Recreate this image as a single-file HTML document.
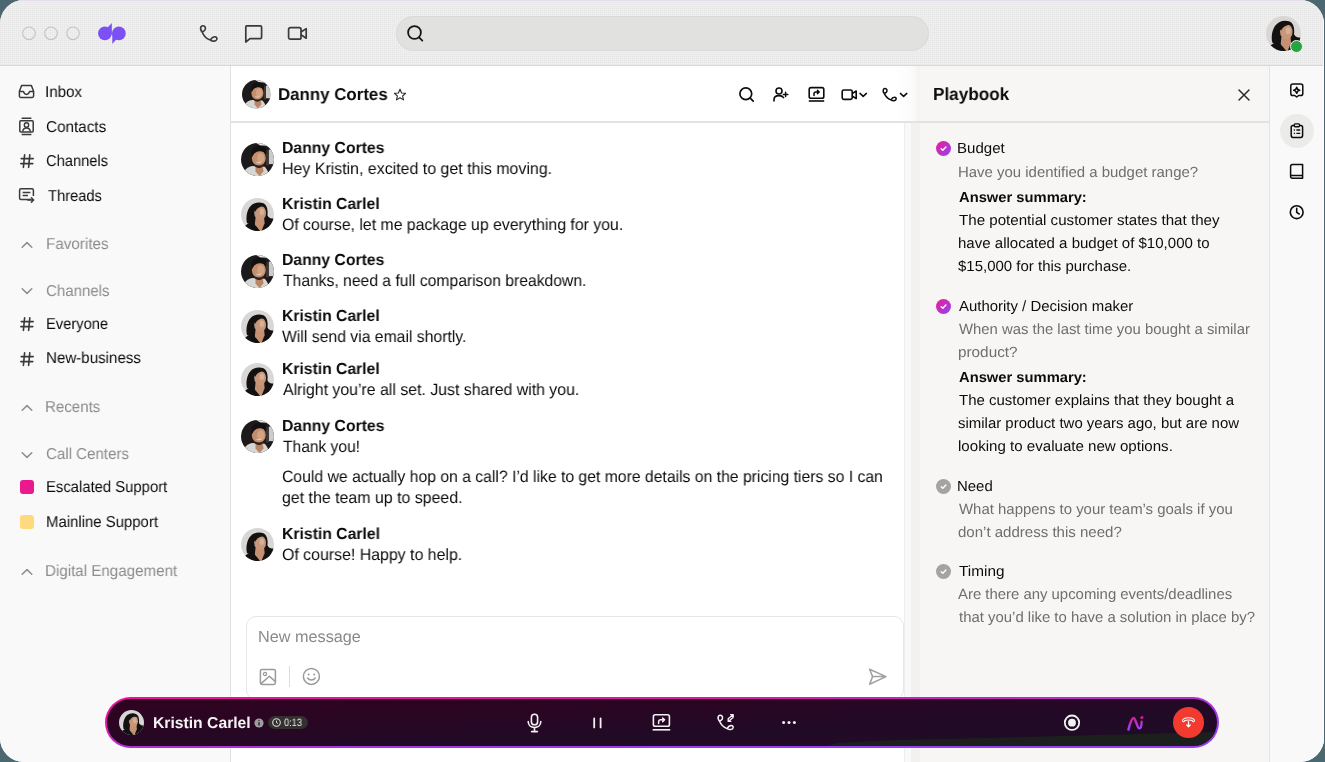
<!DOCTYPE html>
<html><head><meta charset="utf-8"><title>Dialpad</title><style>
*{margin:0;padding:0;box-sizing:border-box}
html,body{width:1325px;height:762px;overflow:hidden;background:#4b676f;font-family:"Liberation Sans",sans-serif}
#win{position:absolute;left:0;top:0;width:1324px;height:762px;border-radius:24px;overflow:hidden;background:#f9f9f9}
#edge{position:absolute;left:1323px;top:0;width:1px;height:762px;background:#fdfdfd;z-index:5}
.t{position:absolute;white-space:nowrap;text-rendering:geometricPrecision;will-change:transform}
.a{position:absolute}
svg{position:absolute;overflow:visible}
</style></head>
<body><div id="win">
<div class="a" style="left:0;top:0;width:1325px;height:66px;background:#eeeeed;border-bottom:1px solid #d8d8d8"></div>
<svg style="left:0;top:0" width="1325" height="65"><defs><pattern id="dots" width="2" height="2" patternUnits="userSpaceOnUse"><rect x="0" y="0" width="1" height="1" fill="#e5e5e5"/></pattern></defs><rect width="1325" height="65" fill="url(#dots)"/></svg>
<div class="a" style="left:0;top:0;width:1325px;height:1px;background:#e6def0"></div>
<div class="a" style="left:0;top:66px;width:231px;height:696px;background:#f9f9f9;border-right:1px solid #e2e2e2"></div>
<div class="a" style="left:231px;top:66px;width:690px;height:696px;background:#ffffff"></div>
<div class="a" style="left:903.6px;top:123px;width:1px;height:639px;background:#ededed"></div>
<div class="a" style="left:904.6px;top:123px;width:6.6px;height:639px;background:#f8f8f8"></div>
<div class="a" style="left:911.2px;top:123px;width:8.6px;height:639px;background:#f1f1f1"></div>
<div class="a" style="left:893px;top:66px;width:26.8px;height:55px;background:linear-gradient(90deg,rgba(0,0,0,0),rgba(0,0,0,0.015) 70%,rgba(0,0,0,0.05))"></div>
<div class="a" style="left:919.8px;top:66px;width:350px;height:696px;background:#f7f6f5"></div>
<div class="a" style="left:1269px;top:66px;width:56px;height:696px;background:#f9f9f9;border-left:1px solid #e3e3e3"></div>
<div class="a" style="left:231px;top:121px;width:1038px;height:2px;background:#e2e2e2"></div>
<svg style="left:21px;top:25px;" width="16" height="16" viewBox="0 0 16 16"><circle cx="8" cy="8.3" r="6.3" fill="none" stroke="#c8c2c2" stroke-width="1.1"/></svg>
<svg style="left:43px;top:25px;" width="16" height="16" viewBox="0 0 16 16"><circle cx="8" cy="8.3" r="6.3" fill="none" stroke="#c8c2c2" stroke-width="1.1"/></svg>
<svg style="left:65.3px;top:25px;" width="16" height="16" viewBox="0 0 16 16"><circle cx="8" cy="8.3" r="6.3" fill="none" stroke="#c8c2c2" stroke-width="1.1"/></svg>
<svg style="left:96px;top:22px;" width="32" height="24" viewBox="0 0 32 24"><g fill="#7b50f5"><circle cx="8.9" cy="11.4" r="6.8"/><path d="M11.6 5.4 L15.8 0.9 L15.8 12.4 L10.5 12.4Z"/><circle cx="22.9" cy="11.4" r="6.8"/><path d="M20.2 17.4 L16.3 22 L16.3 10.4 L21.5 10.4Z"/></g></svg>
<svg style="left:198px;top:22px;" width="22" height="22" viewBox="0 0 22 22"><g transform="translate(0.46,0.5) scale(1.08)"><path d="M3.5 9 C2.2 7.6 1.7 5.4 2.3 4.1 C2.9 2.8 4.7 2.7 5.7 3.6 C6.9 4.7 6.6 6.8 5.2 7.8 C4.6 8.3 4 8.6 3.5 9 C4.8 12.3 7.5 15 11 16.3 C11.8 14.9 13.4 13.2 15.2 13.2 C16.6 13.2 17.4 14.2 17 15.6 C16.5 17.4 13.6 17.9 11 16.3" fill="none" stroke="#3a3a3a" stroke-width="1.5" stroke-linecap="round" stroke-linejoin="round"/></g></svg>
<svg style="left:244px;top:24px;" width="20" height="20" viewBox="0 0 20 20"><path d="M2.6 1.8 H16.2 C17 1.8 17.6 2.4 17.6 3.2 V13.2 C17.6 14 17 14.6 16.2 14.6 H6 L1.8 18 V3.2 C1.8 2.4 2.4 1.8 2.6 1.8Z" fill="none" stroke="#3a3a3a" stroke-width="1.7" stroke-linejoin="round"/></svg>
<svg style="left:287px;top:26px;" width="22" height="15" viewBox="0 0 22 15"><rect x="1.6" y="1.6" width="12.4" height="11.6" rx="1.8" fill="none" stroke="#3a3a3a" stroke-width="1.7"/><path d="M14 6 L19.2 2.6 V12.2 L14 8.8" fill="none" stroke="#3a3a3a" stroke-width="1.7" stroke-linejoin="round"/></svg>
<div class="a" style="left:396px;top:16px;width:533px;height:35px;border-radius:17.5px;background:#e1e1e0;border:1px solid #d9d9d8"></div>
<svg style="left:405px;top:23px;" width="20" height="20" viewBox="0 0 20 20"><circle cx="9.5" cy="9.5" r="6.4" fill="none" stroke="#141414" stroke-width="1.8"/><path d="M14.1 14.3 L17.3 17.6" stroke="#141414" stroke-width="1.8" stroke-linecap="round"/></svg>
<svg style="left:1266.0px;top:16.0px" width="35" height="35" viewBox="0 0 100 100"><defs><clipPath id="c1"><circle cx="50" cy="50" r="50"/></clipPath></defs>
<g clip-path="url(#c1)">
<rect width="100" height="100" fill="#d9d7d5"/>
<path d="M18 76 C14 58 18 40 26 28 C36 14 54 10 68 16 C80 22 82 40 80 52 C84 60 90 62 100 62 L74 82 L34 84Z" fill="#131111"/>
<path d="M44 60 L70 60 L74 100 L40 100Z" fill="#c49272"/>
<ellipse cx="58" cy="45" rx="18" ry="22" fill="#c8977a"/>
<ellipse cx="63" cy="42" rx="7" ry="10" fill="#d4b09a"/>
<path d="M38 34 C44 20 58 18 72 26 C60 25 50 28 43 42Z" fill="#131111"/>
<path d="M2 100 C8 84 20 76 36 74 L50 90 L58 100Z" fill="#121010"/>
<path d="M62 100 L70 80 C80 68 90 64 100 64 V100Z" fill="#121010"/>
</g></svg>
<div class="a" style="left:1289.5px;top:39.5px;width:13px;height:13px;border-radius:50%;background:#23a53f;border:1.5px solid #f4f4f4"></div>
<svg style="left:18px;top:84px;" width="18" height="15" viewBox="0 0 18 15"><path d="M1.4 7.2 L3.6 1.6 H13.4 L15.6 7.2 V12 C15.6 12.8 15 13.4 14.2 13.4 H2.8 C2 13.4 1.4 12.8 1.4 12Z M1.4 7.4 H5.4 C6 9.4 7 10.4 8.5 10.4 C10 10.4 11 9.4 11.6 7.4 H15.6" fill="none" stroke="#3a3a3a" stroke-width="1.5" stroke-linejoin="round"/></svg>
<div id="t0" class="t" style="left:45.43px;top:82.53px;font-size:15.8px;line-height:20px;font-weight:400;color:#0c0c0c;letter-spacing:0px;transform:scaleX(0.9565);transform-origin:0 0;">Inbox</div>
<svg style="left:18px;top:117px;" width="18" height="19" viewBox="0 0 18 19"><path d="M3.6 1.2 H13.4 M3.6 17.6 H13.4" stroke="#3a3a3a" stroke-width="1.5"/><rect x="1.8" y="3.8" width="13.4" height="11.2" rx="1" fill="none" stroke="#3a3a3a" stroke-width="1.5"/><circle cx="8.5" cy="8" r="2.2" fill="none" stroke="#3a3a3a" stroke-width="1.4"/><path d="M4.6 14.6 C5 12 6.6 11 8.5 11 C10.4 11 12 12 12.4 14.6" fill="none" stroke="#3a3a3a" stroke-width="1.4"/></svg>
<div id="t1" class="t" style="left:45.64px;top:118.13px;font-size:15.8px;line-height:20px;font-weight:400;color:#0c0c0c;letter-spacing:0px;transform:scaleX(0.9663);transform-origin:0 0;">Contacts</div>
<svg style="left:19px;top:153px;" width="16" height="16" viewBox="0 0 16 16"><path d="M5.6 1.8 L4.4 14.4 M10.8 1.8 L9.6 14.4 M2.2 5.6 H14.2 M1.8 10.6 H13.8" stroke="#3a3a3a" stroke-width="1.6" stroke-linecap="round"/></svg>
<div id="t2" class="t" style="left:45.82px;top:151.83px;font-size:15.8px;line-height:20px;font-weight:400;color:#0c0c0c;letter-spacing:0px;transform:scaleX(0.9304);transform-origin:0 0;">Channels</div>
<svg style="left:18px;top:187px;" width="18" height="18" viewBox="0 0 18 18"><path d="M13 12.6 H3 C2.2 12.6 1.6 12 1.6 11.2 V3.2 C1.6 2.4 2.2 1.8 3 1.8 H14 C14.8 1.8 15.4 2.4 15.4 3.2 V9" fill="none" stroke="#3a3a3a" stroke-width="1.5" stroke-linejoin="round"/><path d="M4.6 5.4 H12.4 M4.6 8.6 H10" stroke="#3a3a3a" stroke-width="1.5"/><path d="M9.8 13 H15.4 M13.4 10.8 L15.6 13 L13.4 15.2" fill="none" stroke="#3a3a3a" stroke-width="1.5" stroke-linecap="round" stroke-linejoin="round"/></svg>
<div id="t3" class="t" style="left:47.98px;top:186.73px;font-size:15.8px;line-height:20px;font-weight:400;color:#0c0c0c;letter-spacing:0px;transform:scaleX(0.9303);transform-origin:0 0;">Threads</div>
<svg style="left:21px;top:240.5px;" width="12" height="8" viewBox="0 0 12 8"><path d="M1.2 6.2 L6 1.6 L10.8 6.2" fill="none" stroke="#8d8d8d" stroke-width="1.5" stroke-linecap="round" stroke-linejoin="round"/></svg>
<div id="t4" class="t" style="left:46.04px;top:235.43px;font-size:15.8px;line-height:20px;font-weight:400;color:#8c8c8c;letter-spacing:0px;transform:scaleX(0.9633);transform-origin:0 0;">Favorites</div>
<svg style="left:21px;top:287px;" width="12" height="8" viewBox="0 0 12 8"><path d="M1.2 1.8 L6 6.4 L10.8 1.8" fill="none" stroke="#8d8d8d" stroke-width="1.5" stroke-linecap="round" stroke-linejoin="round"/></svg>
<div id="t5" class="t" style="left:46.15px;top:282.33px;font-size:15.8px;line-height:20px;font-weight:400;color:#8c8c8c;letter-spacing:0px;transform:scaleX(0.9525);transform-origin:0 0;">Channels</div>
<svg style="left:19px;top:316px;" width="16" height="16" viewBox="0 0 16 16"><path d="M5.6 1.8 L4.4 14.4 M10.8 1.8 L9.6 14.4 M2.2 5.6 H14.2 M1.8 10.6 H13.8" stroke="#3a3a3a" stroke-width="1.6" stroke-linecap="round"/></svg>
<div id="t6" class="t" style="left:45.87px;top:315.23px;font-size:15.8px;line-height:20px;font-weight:400;color:#0c0c0c;letter-spacing:0px;transform:scaleX(0.9292);transform-origin:0 0;">Everyone</div>
<svg style="left:19px;top:351px;" width="16" height="16" viewBox="0 0 16 16"><path d="M5.6 1.8 L4.4 14.4 M10.8 1.8 L9.6 14.4 M2.2 5.6 H14.2 M1.8 10.6 H13.8" stroke="#3a3a3a" stroke-width="1.6" stroke-linecap="round"/></svg>
<div id="t7" class="t" style="left:45.73px;top:348.93px;font-size:15.8px;line-height:20px;font-weight:400;color:#0c0c0c;letter-spacing:0px;transform:scaleX(0.9566);transform-origin:0 0;">New-business</div>
<svg style="left:21px;top:404px;" width="12" height="8" viewBox="0 0 12 8"><path d="M1.2 6.2 L6 1.6 L10.8 6.2" fill="none" stroke="#8d8d8d" stroke-width="1.5" stroke-linecap="round" stroke-linejoin="round"/></svg>
<div id="t8" class="t" style="left:45.34px;top:398.03px;font-size:15.8px;line-height:20px;font-weight:400;color:#8c8c8c;letter-spacing:0px;transform:scaleX(0.9524);transform-origin:0 0;">Recents</div>
<svg style="left:21px;top:451px;" width="12" height="8" viewBox="0 0 12 8"><path d="M1.2 1.8 L6 6.4 L10.8 1.8" fill="none" stroke="#8d8d8d" stroke-width="1.5" stroke-linecap="round" stroke-linejoin="round"/></svg>
<div id="t9" class="t" style="left:46.15px;top:444.93px;font-size:15.8px;line-height:20px;font-weight:400;color:#8c8c8c;letter-spacing:0px;transform:scaleX(0.9549);transform-origin:0 0;">Call Centers</div>
<div class="a" style="left:20px;top:480px;width:14px;height:14px;border-radius:3px;background:#ea1a8e"></div>
<div id="t10" class="t" style="left:45.87px;top:478.23px;font-size:15.8px;line-height:20px;font-weight:400;color:#0c0c0c;letter-spacing:0px;transform:scaleX(0.9390);transform-origin:0 0;">Escalated Support</div>
<div class="a" style="left:20px;top:515px;width:14px;height:14px;border-radius:3px;background:#ffd97e"></div>
<div id="t11" class="t" style="left:45.79px;top:513.23px;font-size:15.8px;line-height:20px;font-weight:400;color:#0c0c0c;letter-spacing:0px;transform:scaleX(0.9445);transform-origin:0 0;">Mainline Support</div>
<svg style="left:21px;top:567.5px;" width="12" height="8" viewBox="0 0 12 8"><path d="M1.2 6.2 L6 1.6 L10.8 6.2" fill="none" stroke="#8d8d8d" stroke-width="1.5" stroke-linecap="round" stroke-linejoin="round"/></svg>
<div id="t12" class="t" style="left:45.34px;top:561.63px;font-size:15.8px;line-height:20px;font-weight:400;color:#8c8c8c;letter-spacing:0px;transform:scaleX(0.9584);transform-origin:0 0;">Digital Engagement</div>
<svg style="left:241.75px;top:80.05px" width="28.5" height="28.5" viewBox="0 0 100 100"><defs><clipPath id="c2"><circle cx="50" cy="50" r="50"/></clipPath></defs>
<g clip-path="url(#c2)">
<rect width="100" height="100" fill="#1c1a1a"/>
<path d="M46 0 H100 V24 C90 12 76 6 60 8Z" fill="#e6e6e6"/>
<rect x="84" y="20" width="16" height="44" fill="#cbcbcb"/>
<rect x="76" y="22" width="8" height="46" fill="#3c3836"/>
<path d="M4 100 C8 82 20 72 36 70 L72 72 C80 80 84 92 86 100Z" fill="#d8d6d4"/>
<path d="M44 66 L66 66 L68 86 L56 100 L44 86Z" fill="#b98565"/>
<ellipse cx="54" cy="46" rx="21" ry="25" fill="#c48e6c"/>
<ellipse cx="60" cy="46" rx="11" ry="15" fill="#d2a484"/>
<path d="M32 36 C30 16 44 8 58 8 C72 8 80 20 76 34 C70 26 60 24 52 26 C44 28 38 32 35 42Z" fill="#121010"/>
<path d="M34 56 C38 70 46 76 54 76 C62 76 70 70 74 56 C70 64 62 68 54 68 C46 68 38 64 34 56Z" fill="#2a2220"/>
<path d="M47 58 C51 61 57 61 61 57" stroke="#e8ddd4" stroke-width="3" fill="none"/>
</g></svg>
<div id="t13" class="t" style="left:277.50px;top:83.67px;font-size:17.1px;line-height:21px;font-weight:700;color:#0c0c0c;letter-spacing:0px;transform:scaleX(0.9865);transform-origin:0 0;">Danny Cortes</div>
<svg style="left:393px;top:88px;" width="14" height="13" viewBox="0 0 14 13"><path d="M7 1.3 L8.6 5 L12.6 5.3 L9.6 8 L10.5 11.9 L7 9.8 L3.5 11.9 L4.4 8 L1.4 5.3 L5.4 5Z" fill="none" stroke="#2a2a2a" stroke-width="1.1" stroke-linejoin="round"/></svg>
<svg style="left:738px;top:86px;" width="18" height="18" viewBox="0 0 18 18"><circle cx="7.8" cy="7.8" r="5.9" fill="none" stroke="#0c0c0c" stroke-width="1.7"/><path d="M12.2 12.2 L15.2 15.2" stroke="#0c0c0c" stroke-width="1.7" stroke-linecap="round"/></svg>
<svg style="left:772px;top:86px;" width="18" height="17" viewBox="0 0 18 17"><circle cx="7" cy="5" r="3" fill="none" stroke="#0c0c0c" stroke-width="1.6"/><path d="M2 15 V13.6 C2 11.2 3.8 9.6 7 9.6 C9.4 9.6 10.8 10.4 11.6 11.6" fill="none" stroke="#0c0c0c" stroke-width="1.6" stroke-linecap="round"/><path d="M13.6 6.2 V10.6 M11.4 8.4 H15.8" stroke="#0c0c0c" stroke-width="1.5" stroke-linecap="round"/></svg>
<svg style="left:807px;top:86px;" width="19" height="17" viewBox="0 0 19 17"><rect x="2.2" y="1.6" width="14.6" height="10.6" rx="1.8" fill="none" stroke="#0c0c0c" stroke-width="1.6"/><path d="M1.8 15 H17.2" stroke="#0c0c0c" stroke-width="1.6"/><path d="M7 9.6 V8 C7 6.8 7.8 6 9 6 H12 M10.4 4.4 L12.2 6 L10.4 7.6" fill="none" stroke="#0c0c0c" stroke-width="1.5" stroke-linecap="round" stroke-linejoin="round"/></svg>
<svg style="left:840px;top:88px;" width="30" height="14" viewBox="0 0 30 14"><rect x="2.2" y="2" width="10" height="9.4" rx="1.6" fill="none" stroke="#0c0c0c" stroke-width="1.6"/><path d="M12.2 5.6 L16.2 3 V10.6 L12.2 8" fill="none" stroke="#0c0c0c" stroke-width="1.6" stroke-linejoin="round"/><path d="M20 5.4 L23.2 8.4 L26.4 5.4" fill="none" stroke="#0c0c0c" stroke-width="1.5" stroke-linecap="round" stroke-linejoin="round"/></svg>
<svg style="left:882px;top:86px;" width="28" height="17" viewBox="0 0 28 17"><g transform="translate(-0.56,-0.12) scale(0.86)"><path d="M3.5 9 C2.2 7.6 1.7 5.4 2.3 4.1 C2.9 2.8 4.7 2.7 5.7 3.6 C6.9 4.7 6.6 6.8 5.2 7.8 C4.6 8.3 4 8.6 3.5 9 C4.8 12.3 7.5 15 11 16.3 C11.8 14.9 13.4 13.2 15.2 13.2 C16.6 13.2 17.4 14.2 17 15.6 C16.5 17.4 13.6 17.9 11 16.3" fill="none" stroke="#0c0c0c" stroke-width="1.75" stroke-linecap="round" stroke-linejoin="round"/></g><path d="M18.4 7.4 L21.6 10.4 L24.8 7.4" fill="none" stroke="#0c0c0c" stroke-width="1.5" stroke-linecap="round" stroke-linejoin="round"/></svg>
<svg style="left:241.0px;top:142.5px" width="33" height="33" viewBox="0 0 100 100"><defs><clipPath id="c3"><circle cx="50" cy="50" r="50"/></clipPath></defs>
<g clip-path="url(#c3)">
<rect width="100" height="100" fill="#1c1a1a"/>
<path d="M46 0 H100 V24 C90 12 76 6 60 8Z" fill="#e6e6e6"/>
<rect x="84" y="20" width="16" height="44" fill="#cbcbcb"/>
<rect x="76" y="22" width="8" height="46" fill="#3c3836"/>
<path d="M4 100 C8 82 20 72 36 70 L72 72 C80 80 84 92 86 100Z" fill="#d8d6d4"/>
<path d="M44 66 L66 66 L68 86 L56 100 L44 86Z" fill="#b98565"/>
<ellipse cx="54" cy="46" rx="21" ry="25" fill="#c48e6c"/>
<ellipse cx="60" cy="46" rx="11" ry="15" fill="#d2a484"/>
<path d="M32 36 C30 16 44 8 58 8 C72 8 80 20 76 34 C70 26 60 24 52 26 C44 28 38 32 35 42Z" fill="#121010"/>
<path d="M34 56 C38 70 46 76 54 76 C62 76 70 70 74 56 C70 64 62 68 54 68 C46 68 38 64 34 56Z" fill="#2a2220"/>
<path d="M47 58 C51 61 57 61 61 57" stroke="#e8ddd4" stroke-width="3" fill="none"/>
</g></svg>
<div id="t14" class="t" style="left:281.81px;top:138.66px;font-size:16.0px;line-height:20px;font-weight:700;color:#0c0c0c;letter-spacing:0px;transform:scaleX(0.9838);transform-origin:0 0;">Danny Cortes</div>
<div id="t15" class="t" style="left:281.53px;top:158.72px;font-size:16.4px;line-height:20px;font-weight:400;color:#0c0c0c;letter-spacing:0px;transform:scaleX(0.9720);transform-origin:0 0;">Hey Kristin, excited to get this moving.</div>
<svg style="left:241.0px;top:198.4px" width="33" height="33" viewBox="0 0 100 100"><defs><clipPath id="c4"><circle cx="50" cy="50" r="50"/></clipPath></defs>
<g clip-path="url(#c4)">
<rect width="100" height="100" fill="#d9d7d5"/>
<path d="M18 76 C14 58 18 40 26 28 C36 14 54 10 68 16 C80 22 82 40 80 52 C84 60 90 62 100 62 L74 82 L34 84Z" fill="#131111"/>
<path d="M44 60 L70 60 L74 100 L40 100Z" fill="#c49272"/>
<ellipse cx="58" cy="45" rx="18" ry="22" fill="#c8977a"/>
<ellipse cx="63" cy="42" rx="7" ry="10" fill="#d4b09a"/>
<path d="M38 34 C44 20 58 18 72 26 C60 25 50 28 43 42Z" fill="#131111"/>
<path d="M2 100 C8 84 20 76 36 74 L50 90 L58 100Z" fill="#121010"/>
<path d="M62 100 L70 80 C80 68 90 64 100 64 V100Z" fill="#121010"/>
</g></svg>
<div id="t16" class="t" style="left:281.82px;top:194.56px;font-size:16.0px;line-height:20px;font-weight:700;color:#0c0c0c;letter-spacing:0px;transform:scaleX(0.9804);transform-origin:0 0;">Kristin Carlel</div>
<div id="t17" class="t" style="left:281.81px;top:214.62px;font-size:16.4px;line-height:20px;font-weight:400;color:#0c0c0c;letter-spacing:0px;transform:scaleX(0.9652);transform-origin:0 0;">Of course, let me package up everything for you.</div>
<svg style="left:241.0px;top:254.5px" width="33" height="33" viewBox="0 0 100 100"><defs><clipPath id="c5"><circle cx="50" cy="50" r="50"/></clipPath></defs>
<g clip-path="url(#c5)">
<rect width="100" height="100" fill="#1c1a1a"/>
<path d="M46 0 H100 V24 C90 12 76 6 60 8Z" fill="#e6e6e6"/>
<rect x="84" y="20" width="16" height="44" fill="#cbcbcb"/>
<rect x="76" y="22" width="8" height="46" fill="#3c3836"/>
<path d="M4 100 C8 82 20 72 36 70 L72 72 C80 80 84 92 86 100Z" fill="#d8d6d4"/>
<path d="M44 66 L66 66 L68 86 L56 100 L44 86Z" fill="#b98565"/>
<ellipse cx="54" cy="46" rx="21" ry="25" fill="#c48e6c"/>
<ellipse cx="60" cy="46" rx="11" ry="15" fill="#d2a484"/>
<path d="M32 36 C30 16 44 8 58 8 C72 8 80 20 76 34 C70 26 60 24 52 26 C44 28 38 32 35 42Z" fill="#121010"/>
<path d="M34 56 C38 70 46 76 54 76 C62 76 70 70 74 56 C70 64 62 68 54 68 C46 68 38 64 34 56Z" fill="#2a2220"/>
<path d="M47 58 C51 61 57 61 61 57" stroke="#e8ddd4" stroke-width="3" fill="none"/>
</g></svg>
<div id="t18" class="t" style="left:281.87px;top:250.66px;font-size:16.0px;line-height:20px;font-weight:700;color:#0c0c0c;letter-spacing:0px;transform:scaleX(0.9829);transform-origin:0 0;">Danny Cortes</div>
<div id="t19" class="t" style="left:282.75px;top:270.72px;font-size:16.4px;line-height:20px;font-weight:400;color:#0c0c0c;letter-spacing:0px;transform:scaleX(0.9567);transform-origin:0 0;">Thanks, need a full comparison breakdown.</div>
<svg style="left:241.0px;top:309.90000000000003px" width="33" height="33" viewBox="0 0 100 100"><defs><clipPath id="c6"><circle cx="50" cy="50" r="50"/></clipPath></defs>
<g clip-path="url(#c6)">
<rect width="100" height="100" fill="#d9d7d5"/>
<path d="M18 76 C14 58 18 40 26 28 C36 14 54 10 68 16 C80 22 82 40 80 52 C84 60 90 62 100 62 L74 82 L34 84Z" fill="#131111"/>
<path d="M44 60 L70 60 L74 100 L40 100Z" fill="#c49272"/>
<ellipse cx="58" cy="45" rx="18" ry="22" fill="#c8977a"/>
<ellipse cx="63" cy="42" rx="7" ry="10" fill="#d4b09a"/>
<path d="M38 34 C44 20 58 18 72 26 C60 25 50 28 43 42Z" fill="#131111"/>
<path d="M2 100 C8 84 20 76 36 74 L50 90 L58 100Z" fill="#121010"/>
<path d="M62 100 L70 80 C80 68 90 64 100 64 V100Z" fill="#121010"/>
</g></svg>
<div id="t20" class="t" style="left:281.82px;top:307.06px;font-size:16.0px;line-height:20px;font-weight:700;color:#0c0c0c;letter-spacing:0px;transform:scaleX(0.9804);transform-origin:0 0;">Kristin Carlel</div>
<div id="t21" class="t" style="left:282.20px;top:327.12px;font-size:16.4px;line-height:20px;font-weight:400;color:#0c0c0c;letter-spacing:0px;transform:scaleX(0.9610);transform-origin:0 0;">Will send via email shortly.</div>
<svg style="left:241.0px;top:363.40000000000003px" width="33" height="33" viewBox="0 0 100 100"><defs><clipPath id="c7"><circle cx="50" cy="50" r="50"/></clipPath></defs>
<g clip-path="url(#c7)">
<rect width="100" height="100" fill="#d9d7d5"/>
<path d="M18 76 C14 58 18 40 26 28 C36 14 54 10 68 16 C80 22 82 40 80 52 C84 60 90 62 100 62 L74 82 L34 84Z" fill="#131111"/>
<path d="M44 60 L70 60 L74 100 L40 100Z" fill="#c49272"/>
<ellipse cx="58" cy="45" rx="18" ry="22" fill="#c8977a"/>
<ellipse cx="63" cy="42" rx="7" ry="10" fill="#d4b09a"/>
<path d="M38 34 C44 20 58 18 72 26 C60 25 50 28 43 42Z" fill="#131111"/>
<path d="M2 100 C8 84 20 76 36 74 L50 90 L58 100Z" fill="#121010"/>
<path d="M62 100 L70 80 C80 68 90 64 100 64 V100Z" fill="#121010"/>
</g></svg>
<div id="t22" class="t" style="left:281.82px;top:359.56px;font-size:16.0px;line-height:20px;font-weight:700;color:#0c0c0c;letter-spacing:0px;transform:scaleX(0.9804);transform-origin:0 0;">Kristin Carlel</div>
<div id="t23" class="t" style="left:282.76px;top:379.62px;font-size:16.4px;line-height:20px;font-weight:400;color:#0c0c0c;letter-spacing:0px;transform:scaleX(0.9680);transform-origin:0 0;">Alright you’re all set. Just shared with you.</div>
<svg style="left:241.0px;top:420.1px" width="33" height="33" viewBox="0 0 100 100"><defs><clipPath id="c8"><circle cx="50" cy="50" r="50"/></clipPath></defs>
<g clip-path="url(#c8)">
<rect width="100" height="100" fill="#1c1a1a"/>
<path d="M46 0 H100 V24 C90 12 76 6 60 8Z" fill="#e6e6e6"/>
<rect x="84" y="20" width="16" height="44" fill="#cbcbcb"/>
<rect x="76" y="22" width="8" height="46" fill="#3c3836"/>
<path d="M4 100 C8 82 20 72 36 70 L72 72 C80 80 84 92 86 100Z" fill="#d8d6d4"/>
<path d="M44 66 L66 66 L68 86 L56 100 L44 86Z" fill="#b98565"/>
<ellipse cx="54" cy="46" rx="21" ry="25" fill="#c48e6c"/>
<ellipse cx="60" cy="46" rx="11" ry="15" fill="#d2a484"/>
<path d="M32 36 C30 16 44 8 58 8 C72 8 80 20 76 34 C70 26 60 24 52 26 C44 28 38 32 35 42Z" fill="#121010"/>
<path d="M34 56 C38 70 46 76 54 76 C62 76 70 70 74 56 C70 64 62 68 54 68 C46 68 38 64 34 56Z" fill="#2a2220"/>
<path d="M47 58 C51 61 57 61 61 57" stroke="#e8ddd4" stroke-width="3" fill="none"/>
</g></svg>
<div id="t24" class="t" style="left:281.81px;top:417.26px;font-size:16.0px;line-height:20px;font-weight:700;color:#0c0c0c;letter-spacing:0px;transform:scaleX(0.9838);transform-origin:0 0;">Danny Cortes</div>
<div id="t25" class="t" style="left:282.75px;top:437.32px;font-size:16.4px;line-height:20px;font-weight:400;color:#0c0c0c;letter-spacing:0px;transform:scaleX(0.9504);transform-origin:0 0;">Thank you!</div>
<svg style="left:241.0px;top:528.3px" width="33" height="33" viewBox="0 0 100 100"><defs><clipPath id="c9"><circle cx="50" cy="50" r="50"/></clipPath></defs>
<g clip-path="url(#c9)">
<rect width="100" height="100" fill="#d9d7d5"/>
<path d="M18 76 C14 58 18 40 26 28 C36 14 54 10 68 16 C80 22 82 40 80 52 C84 60 90 62 100 62 L74 82 L34 84Z" fill="#131111"/>
<path d="M44 60 L70 60 L74 100 L40 100Z" fill="#c49272"/>
<ellipse cx="58" cy="45" rx="18" ry="22" fill="#c8977a"/>
<ellipse cx="63" cy="42" rx="7" ry="10" fill="#d4b09a"/>
<path d="M38 34 C44 20 58 18 72 26 C60 25 50 28 43 42Z" fill="#131111"/>
<path d="M2 100 C8 84 20 76 36 74 L50 90 L58 100Z" fill="#121010"/>
<path d="M62 100 L70 80 C80 68 90 64 100 64 V100Z" fill="#121010"/>
</g></svg>
<div id="t26" class="t" style="left:281.82px;top:525.46px;font-size:16.0px;line-height:20px;font-weight:700;color:#0c0c0c;letter-spacing:0px;transform:scaleX(0.9834);transform-origin:0 0;">Kristin Carlel</div>
<div id="t27" class="t" style="left:281.81px;top:544.52px;font-size:16.4px;line-height:20px;font-weight:400;color:#0c0c0c;letter-spacing:0px;transform:scaleX(0.9696);transform-origin:0 0;">Of course! Happy to help.</div>
<div id="t28" class="t" style="left:282.09px;top:467.22px;font-size:16.4px;line-height:20px;font-weight:400;color:#0c0c0c;letter-spacing:0px;transform:scaleX(0.9599);transform-origin:0 0;">Could we actually hop on a call? I’d like to get more details on the pricing tiers so I can</div>
<div id="t29" class="t" style="left:282.00px;top:487.92px;font-size:16.4px;line-height:20px;font-weight:400;color:#0c0c0c;letter-spacing:0px;transform:scaleX(0.9713);transform-origin:0 0;">get the team up to speed.</div>
<div class="a" style="left:246px;top:616px;width:658px;height:84px;border-radius:10px;background:#fff;border:1px solid #e6e6e6"></div>
<div id="t30" class="t" style="left:258.35px;top:627.32px;font-size:16.1px;line-height:20px;font-weight:400;color:#8a8a8a;letter-spacing:0px;transform:scaleX(1.0084);transform-origin:0 0;">New message</div>
<svg style="left:259px;top:668px;" width="18" height="18" viewBox="0 0 18 18"><rect x="1.4" y="1.4" width="15" height="15" rx="1.6" fill="none" stroke="#9a9a9a" stroke-width="1.5"/><circle cx="6" cy="6" r="1.6" fill="none" stroke="#9a9a9a" stroke-width="1.3"/><path d="M2 15.6 L10.4 8.2 L16.4 13.6" fill="none" stroke="#9a9a9a" stroke-width="1.5" stroke-linejoin="round"/></svg>
<div class="a" style="left:289px;top:666px;width:1px;height:21px;background:#dddddd"></div>
<svg style="left:302px;top:667px;" width="19" height="19" viewBox="0 0 19 19"><circle cx="9.4" cy="9.4" r="8" fill="none" stroke="#9a9a9a" stroke-width="1.5"/><circle cx="6.6" cy="7.4" r="1" fill="#9a9a9a"/><circle cx="12.2" cy="7.4" r="1" fill="#9a9a9a"/><path d="M5.6 11 C7.4 13.6 11.4 13.6 13.2 11" fill="none" stroke="#9a9a9a" stroke-width="1.5" stroke-linecap="round"/></svg>
<svg style="left:868px;top:668px;" width="20" height="18" viewBox="0 0 20 18"><path d="M1.6 1.2 L18 8.6 L1.6 16.2 L4.6 8.6Z M4.6 8.6 H18" fill="none" stroke="#a0a0a0" stroke-width="1.5" stroke-linejoin="round"/></svg>
<div id="t31" class="t" style="left:933.10px;top:82.80px;font-size:17.6px;line-height:22px;font-weight:700;color:#0c0c0c;letter-spacing:0px;transform:scaleX(0.9733);transform-origin:0 0;">Playbook</div>
<svg style="left:1237px;top:88px;" width="14" height="14" viewBox="0 0 14 14"><path d="M2 2 L12 12 M12 2 L2 12" stroke="#2a2a2a" stroke-width="1.5" stroke-linecap="round"/></svg>
<svg style="left:936.0px;top:141.4px;" width="15" height="15" viewBox="0 0 15 15"><defs><linearGradient id="g10" x1="0" y1="0" x2="1" y2="1"><stop offset="0" stop-color="#ef1c92"/><stop offset="1" stop-color="#8f44f6"/></linearGradient></defs><circle cx="7.5" cy="7.5" r="7.5" fill="url(#g10)"/><path d="M5.2 7.7 L6.8 9.2 L9.9 6.1" fill="none" stroke="#fff" stroke-width="1.4" stroke-linecap="round" stroke-linejoin="round"/></svg>
<div id="t32" class="t" style="left:957.34px;top:140.31px;font-size:14.7px;line-height:18px;font-weight:400;color:#0c0c0c;letter-spacing:0px;transform:scaleX(1.0240);transform-origin:0 0;">Budget</div>
<div id="t33" class="t" style="left:957.74px;top:163.57px;font-size:14.8px;line-height:18px;font-weight:400;color:#6e6e6e;letter-spacing:0px;transform:scaleX(1.0097);transform-origin:0 0;">Have you identified a budget range?</div>
<div id="t34" class="t" style="left:958.50px;top:188.71px;font-size:14.4px;line-height:18px;font-weight:700;color:#0c0c0c;letter-spacing:0px;transform:scaleX(1.0241);transform-origin:0 0;">Answer summary:</div>
<div id="t35" class="t" style="left:958.53px;top:211.71px;font-size:14.7px;line-height:18px;font-weight:400;color:#0c0c0c;letter-spacing:0px;transform:scaleX(1.0293);transform-origin:0 0;">The potential customer states that they</div>
<div id="t36" class="t" style="left:957.82px;top:234.71px;font-size:14.7px;line-height:18px;font-weight:400;color:#0c0c0c;letter-spacing:0px;transform:scaleX(1.0234);transform-origin:0 0;">have allocated a budget of $10,000 to</div>
<div id="t37" class="t" style="left:958.20px;top:257.51px;font-size:14.7px;line-height:18px;font-weight:400;color:#0c0c0c;letter-spacing:0px;transform:scaleX(1.0201);transform-origin:0 0;">$15,000 for this purchase.</div>
<svg style="left:936.0px;top:298.5px;" width="15" height="15" viewBox="0 0 15 15"><defs><linearGradient id="g11" x1="0" y1="0" x2="1" y2="1"><stop offset="0" stop-color="#ef1c92"/><stop offset="1" stop-color="#8f44f6"/></linearGradient></defs><circle cx="7.5" cy="7.5" r="7.5" fill="url(#g11)"/><path d="M5.2 7.7 L6.8 9.2 L9.9 6.1" fill="none" stroke="#fff" stroke-width="1.4" stroke-linecap="round" stroke-linejoin="round"/></svg>
<div id="t38" class="t" style="left:958.76px;top:297.61px;font-size:14.7px;line-height:18px;font-weight:400;color:#0c0c0c;letter-spacing:0px;transform:scaleX(1.0167);transform-origin:0 0;">Authority / Decision maker</div>
<div id="t39" class="t" style="left:958.70px;top:320.57px;font-size:14.8px;line-height:18px;font-weight:400;color:#6e6e6e;letter-spacing:0px;transform:scaleX(1.0048);transform-origin:0 0;">When was the last time you bought a similar</div>
<div id="t40" class="t" style="left:958.08px;top:344.47px;font-size:14.8px;line-height:18px;font-weight:400;color:#6e6e6e;letter-spacing:0px;transform:scaleX(1.0344);transform-origin:0 0;">product?</div>
<div id="t41" class="t" style="left:958.50px;top:368.91px;font-size:14.4px;line-height:18px;font-weight:700;color:#0c0c0c;letter-spacing:0px;transform:scaleX(1.0241);transform-origin:0 0;">Answer summary:</div>
<div id="t42" class="t" style="left:958.59px;top:391.81px;font-size:14.7px;line-height:18px;font-weight:400;color:#0c0c0c;letter-spacing:0px;transform:scaleX(1.0206);transform-origin:0 0;">The customer explains that they bought a</div>
<div id="t43" class="t" style="left:958.32px;top:414.81px;font-size:14.7px;line-height:18px;font-weight:400;color:#0c0c0c;letter-spacing:0px;transform:scaleX(1.0186);transform-origin:0 0;">similar product two years ago, but are now</div>
<div id="t44" class="t" style="left:958.16px;top:437.71px;font-size:14.7px;line-height:18px;font-weight:400;color:#0c0c0c;letter-spacing:0px;transform:scaleX(1.0278);transform-origin:0 0;">looking to evaluate new options.</div>
<svg style="left:936.0px;top:478.5px;" width="15" height="15" viewBox="0 0 15 15"><defs><linearGradient id="g12" x1="0" y1="0" x2="1" y2="1"><stop offset="0" stop-color="#ef1c92"/><stop offset="1" stop-color="#8f44f6"/></linearGradient></defs><circle cx="7.5" cy="7.5" r="7.5" fill="#a3a3a3"/><path d="M5.2 7.7 L6.8 9.2 L9.9 6.1" fill="none" stroke="#fff" stroke-width="1.4" stroke-linecap="round" stroke-linejoin="round"/></svg>
<div id="t45" class="t" style="left:957.43px;top:477.71px;font-size:14.7px;line-height:18px;font-weight:400;color:#0c0c0c;letter-spacing:0px;transform:scaleX(1.0166);transform-origin:0 0;">Need</div>
<div id="t46" class="t" style="left:958.70px;top:500.67px;font-size:14.8px;line-height:18px;font-weight:400;color:#6e6e6e;letter-spacing:0px;transform:scaleX(1.0099);transform-origin:0 0;">What happens to your team’s goals if you</div>
<div id="t47" class="t" style="left:958.23px;top:523.67px;font-size:14.8px;line-height:18px;font-weight:400;color:#6e6e6e;letter-spacing:0px;transform:scaleX(1.0156);transform-origin:0 0;">don’t address this need?</div>
<svg style="left:936.0px;top:563.5px;" width="15" height="15" viewBox="0 0 15 15"><defs><linearGradient id="g13" x1="0" y1="0" x2="1" y2="1"><stop offset="0" stop-color="#ef1c92"/><stop offset="1" stop-color="#8f44f6"/></linearGradient></defs><circle cx="7.5" cy="7.5" r="7.5" fill="#a3a3a3"/><path d="M5.2 7.7 L6.8 9.2 L9.9 6.1" fill="none" stroke="#fff" stroke-width="1.4" stroke-linecap="round" stroke-linejoin="round"/></svg>
<div id="t48" class="t" style="left:958.53px;top:562.71px;font-size:14.7px;line-height:18px;font-weight:400;color:#0c0c0c;letter-spacing:0px;transform:scaleX(1.0454);transform-origin:0 0;">Timing</div>
<div id="t49" class="t" style="left:958.40px;top:585.67px;font-size:14.8px;line-height:18px;font-weight:400;color:#6e6e6e;letter-spacing:0px;transform:scaleX(1.0068);transform-origin:0 0;">Are there any upcoming events/deadlines</div>
<div id="t50" class="t" style="left:958.69px;top:608.67px;font-size:14.8px;line-height:18px;font-weight:400;color:#6e6e6e;letter-spacing:0px;transform:scaleX(1.0081);transform-origin:0 0;">that you’d like to have a solution in place by?</div>
<div class="a" style="left:1279.8px;top:113.7px;width:34px;height:34px;border-radius:50%;background:#ebebea"></div>
<svg style="left:1288px;top:82px;" width="18" height="18" viewBox="0 0 18 18"><path d="M4.9 2.1 H12.7 C13.9 2.1 14.8 3 14.8 4.2 V11.4 C14.8 12.6 13.9 13.5 12.7 13.5 H10.6 L8.7 15 L6.8 13.5 H4.9 C3.7 13.5 2.8 12.6 2.8 11.4 V4.2 C2.8 3 3.7 2.1 4.9 2.1Z" fill="none" stroke="#0c0c0c" stroke-width="1.5" stroke-linejoin="round"/><path d="M8.7 5.3 Q9.2 7.8 11.7 8.3 Q9.2 8.8 8.7 11.3 Q8.2 8.8 5.7 8.3 Q8.2 7.8 8.7 5.3Z" fill="none" stroke="#0c0c0c" stroke-width="1.6" stroke-linejoin="round"/></svg>
<svg style="left:1288px;top:122px;" width="18" height="18" viewBox="0 0 18 18"><rect x="3.2" y="3.4" width="11.4" height="12" rx="1.8" fill="none" stroke="#0c0c0c" stroke-width="1.5"/><rect x="6.3" y="1.9" width="5.2" height="2.8" rx="0.9" fill="#ebebea" stroke="#0c0c0c" stroke-width="1.4"/><path d="M5.8 8 H6.9 M8.4 8 H12.2 M5.8 11.4 H6.9 M8.4 11.4 H12.2" stroke="#0c0c0c" stroke-width="1.4"/></svg>
<svg style="left:1288px;top:163px;" width="18" height="18" viewBox="0 0 18 18"><path d="M4.6 1.6 H14.6 V15.2 H4.6 C3.4 15.2 2.6 14.4 2.6 13.2 V3.6 C2.6 2.4 3.4 1.6 4.6 1.6Z" fill="none" stroke="#0c0c0c" stroke-width="1.5" stroke-linejoin="round"/><path d="M2.8 12.4 H14.6" stroke="#0c0c0c" stroke-width="1.5"/></svg>
<svg style="left:1288px;top:203px;" width="18" height="18" viewBox="0 0 18 18"><circle cx="8.7" cy="9.2" r="6.4" fill="none" stroke="#0c0c0c" stroke-width="1.6"/><path d="M8.7 5.4 V9.4 L11.2 11" fill="none" stroke="#0c0c0c" stroke-width="1.6" stroke-linecap="round" stroke-linejoin="round"/></svg>
<div class="a" style="left:105px;top:697px;width:1113.5px;height:51px;border-radius:26px;background:linear-gradient(to bottom right,#ee119a 0%,#dc18a6 28%,#b42fd2 50%,#9a3df1 75%,#953ff3 100%);"></div>
<div class="a" style="left:106.6px;top:698.6px;width:1110.3px;height:47.8px;border-radius:24px;overflow:hidden;background:linear-gradient(to bottom right,#2f0320 0%,#2a0522 30%,#220a26 60%,#1f0c28 100%);"><svg style="left:0;top:0" width="1110" height="47"><path d="M720 47 L730 44 L790 41 L880 39 L990 36 L1110 33 V47Z" fill="#1d1f1e"/></svg></div>
<svg style="left:119.0px;top:709.9px" width="25" height="25" viewBox="0 0 100 100"><defs><clipPath id="c14"><circle cx="50" cy="50" r="50"/></clipPath></defs>
<g clip-path="url(#c14)">
<rect width="100" height="100" fill="#d9d7d5"/>
<path d="M18 76 C14 58 18 40 26 28 C36 14 54 10 68 16 C80 22 82 40 80 52 C84 60 90 62 100 62 L74 82 L34 84Z" fill="#131111"/>
<path d="M44 60 L70 60 L74 100 L40 100Z" fill="#c49272"/>
<ellipse cx="58" cy="45" rx="18" ry="22" fill="#c8977a"/>
<ellipse cx="63" cy="42" rx="7" ry="10" fill="#d4b09a"/>
<path d="M38 34 C44 20 58 18 72 26 C60 25 50 28 43 42Z" fill="#131111"/>
<path d="M2 100 C8 84 20 76 36 74 L50 90 L58 100Z" fill="#121010"/>
<path d="M62 100 L70 80 C80 68 90 64 100 64 V100Z" fill="#121010"/>
</g></svg>
<div id="t51" class="t" style="left:152.75px;top:714.46px;font-size:15.7px;line-height:20px;font-weight:700;color:#f4f4f4;letter-spacing:0px;transform:scaleX(1.0006);transform-origin:0 0;">Kristin Carlel</div>
<svg style="left:254px;top:718px;" width="10" height="10" viewBox="0 0 10 10"><circle cx="5" cy="5" r="4.6" fill="#9d9d9d"/><path d="M5 4.2 V7.4" stroke="#2a0a22" stroke-width="1.3"/><circle cx="5" cy="2.6" r=".7" fill="#2a0a22"/></svg>
<div class="a" style="left:268px;top:715.8px;width:40px;height:13.6px;border-radius:7px;background:#34302f"></div>
<svg style="left:271px;top:717px;" width="11" height="11" viewBox="0 0 11 11"><circle cx="5.5" cy="5.5" r="3.8" fill="none" stroke="#e0e0e0" stroke-width="1.1"/><path d="M5.5 3.6 V5.7 L6.8 6.6" fill="none" stroke="#e0e0e0" stroke-width="1"/></svg>
<div id="t52" class="t" style="left:284.25px;top:717.13px;font-size:10.6px;line-height:13px;font-weight:400;color:#e6e6e6;letter-spacing:0px;transform:scaleX(0.8730);transform-origin:0 0;">0:13</div>
<svg style="left:526px;top:713px;" width="17" height="20" viewBox="0 0 17 20"><rect x="5.4" y="1.2" width="6.2" height="10.6" rx="3.1" fill="none" stroke="#f2f2f2" stroke-width="1.6"/><path d="M2.2 8.6 C2.2 12.4 5 14.6 8.5 14.6 C12 14.6 14.8 12.4 14.8 8.6 M8.5 14.6 V18.4 M5.6 18.6 H11.4" fill="none" stroke="#f2f2f2" stroke-width="1.6" stroke-linecap="round"/></svg>
<svg style="left:592px;top:717px;" width="12" height="12" viewBox="0 0 12 12"><path d="M2.2 1.4 V10.4 M8.6 1.4 V10.4" stroke="#f2f2f2" stroke-width="1.8" stroke-linecap="round"/></svg>
<svg style="left:651px;top:713px;" width="21" height="19" viewBox="0 0 21 19"><rect x="2.4" y="1.8" width="16" height="11.4" rx="1.8" fill="none" stroke="#f2f2f2" stroke-width="1.6"/><path d="M1.6 16.8 H19.2" stroke="#f2f2f2" stroke-width="1.6"/><path d="M7.6 10.6 V9 C7.6 7.6 8.4 6.8 9.8 6.8 H13.4 M11.6 5 L13.6 6.8 L11.6 8.6" fill="none" stroke="#f2f2f2" stroke-width="1.5" stroke-linecap="round" stroke-linejoin="round"/></svg>
<svg style="left:716px;top:712px;" width="20" height="20" viewBox="0 0 20 20"><g transform="translate(0.1,0.3)"><path d="M3.5 9 C2.2 7.6 1.7 5.4 2.3 4.1 C2.9 2.8 4.7 2.7 5.7 3.6 C6.9 4.7 6.6 6.8 5.2 7.8 C4.6 8.3 4 8.6 3.5 9 C4.8 12.3 7.5 15 11 16.3 C11.8 14.9 13.4 13.2 15.2 13.2 C16.6 13.2 17.4 14.2 17 15.6 C16.5 17.4 13.6 17.9 11 16.3" fill="none" stroke="#f2f2f2" stroke-width="1.5" stroke-linecap="round" stroke-linejoin="round"/></g><path d="M12.8 6.2 L17 2.8 M14.6 2.6 H17.2 V5.2 M16.8 5.8 L12.6 9.2 M12.2 6.8 V9.4 H14.8" fill="none" stroke="#f2f2f2" stroke-width="1.4" stroke-linecap="round" stroke-linejoin="round"/></svg>
<svg style="left:780px;top:719px;" width="18" height="7" viewBox="0 0 18 7"><circle cx="3.6" cy="3.6" r="1.5" fill="#f2f2f2"/><circle cx="9" cy="3.6" r="1.5" fill="#f2f2f2"/><circle cx="14.4" cy="3.6" r="1.5" fill="#f2f2f2"/></svg>
<svg style="left:1063px;top:714px;" width="18" height="18" viewBox="0 0 18 18"><circle cx="9" cy="8.7" r="7.2" fill="none" stroke="#f2f2f2" stroke-width="1.8"/><circle cx="9" cy="8.7" r="3.9" fill="#f2f2f2"/></svg>
<svg style="left:1126px;top:715px;" width="21" height="17" viewBox="0 0 21 17"><defs><linearGradient id="ai" x1="0" y1="0" x2="0" y2="1"><stop offset="0" stop-color="#e5189e"/><stop offset="1" stop-color="#8e4bf4"/></linearGradient></defs><path d="M2.4 14.6 C3.6 10 5.6 3 7.6 3 C9.6 3 11.2 13.4 13.4 13.4 C14.8 13.4 15.6 10.6 15.6 6.6 M15.6 2.6 V2.8" fill="none" stroke="url(#ai)" stroke-width="2.4" stroke-linecap="round"/><circle cx="16.2" cy="2.4" r="1.2" fill="#e5189e"/></svg>
<div class="a" style="left:1172.7px;top:706.8px;width:31.6px;height:31.6px;border-radius:50%;background:#f23a2f"></div>
<svg style="left:1179px;top:715px;" width="19" height="16" viewBox="0 0 19 16"><g transform="translate(1.9,1.6) scale(0.8)"><path d="M2.2 5.6 C1.9 4.6 2.2 3.8 3 3.2 C6.6 0.9 12.4 0.9 16 3.2 C16.8 3.8 17.1 4.6 16.8 5.6 C16.6 6.2 16 6.5 15.3 6.3 C14.6 6.1 14.2 5.6 14.2 4.9 C12.4 3.9 6.6 3.9 4.8 4.9 C4.8 5.6 4.4 6.1 3.7 6.3 C3 6.5 2.4 6.2 2.2 5.6Z" fill="none" stroke="#fff" stroke-width="1.3" stroke-linejoin="round"/><path d="M9.5 6.2 V12.6 M7.2 10.4 L9.5 12.8 L11.8 10.4" fill="none" stroke="#fff" stroke-width="1.6" stroke-linecap="round" stroke-linejoin="round"/></g></svg>
<div id="edge"></div></div></body></html>
